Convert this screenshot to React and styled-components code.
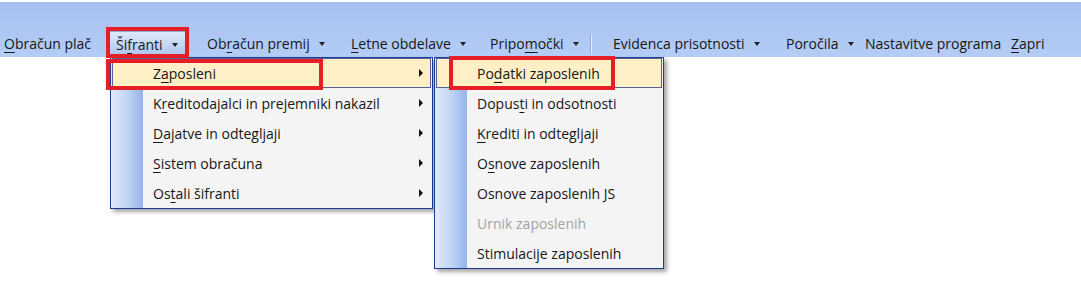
import React from "react";
import styled, { createGlobalStyle, css } from "styled-components";

const GlobalStyle = createGlobalStyle`
  html, body { margin: 0; padding: 0; background: #ffffff; }
  body { font-family: "Open Sans", "Noto Sans", sans-serif; font-size: 14px; color: #1b1b1b; }
  * { box-sizing: border-box; }
`;

const Screen = styled.div`
  position: relative;
  width: 1081px;
  height: 288px;
  overflow: hidden;
  background: #ffffff;
`;

const MenuBar = styled.nav`
  margin-top: 2px;
  height: 55px;
  display: flex;
  align-items: flex-end;
  background: linear-gradient(to bottom, #a5c0ef 0%, #b4cdf6 100%);
`;

const BarItem = styled.div`
  flex: none;
  height: 26px;
  width: ${(p) => p.$w}px;
  margin-left: ${(p) => p.$ml || 0}px;
  padding-left: ${(p) => (p.$pl != null ? p.$pl : 7)}px;
  padding-bottom: 1px;
  display: flex;
  align-items: center;
  white-space: nowrap;
  color: #161616;
  ${(p) =>
    p.$active &&
    css`
      background: linear-gradient(to bottom, #dde9fb 0%, #c3d7f5 50%, #a8c3ee 100%);
      border: 1px solid #8ea9d6;
      border-bottom: none;
      padding-left: 6px;
    `}
`;

const Caret = styled.span`
  display: inline-block;
  margin-left: 9px;
  width: 0;
  height: 0;
  border-left: 3.5px solid transparent;
  border-right: 3.5px solid transparent;
  border-top: 4px solid #222;
  margin-top: 1px;
`;

const BarSeparator = styled.div`
  flex: none;
  width: 19px;
  height: 26px;
  display: flex;
  align-items: center;
  padding-left: 3px;
  &::before {
    content: "";
    width: 1px;
    height: 20px;
    background: #93abd6;
    box-shadow: 1px 0 0 #e6eefb;
  }
`;

const Mnemonic = styled.span`
  text-decoration: underline;
  text-underline-offset: 3px;
  text-decoration-thickness: 1px;
`;

const Menu = styled.div`
  position: absolute;
  left: ${(p) => p.$left}px;
  top: ${(p) => p.$top}px;
  width: ${(p) => p.$width}px;
  border: 1px solid #1d3c8f;
  background: linear-gradient(to right, #e0eafb 0px, #c2d5f5 16px, #93b3e8 32px, #f4f4f4 32px);
  box-shadow: 3px 3px 4px rgba(0, 0, 0, 0.35);
  display: flex;
  flex-direction: column;
`;

const Row = styled.div`
  height: 30px;
  display: flex;
  align-items: center;
  padding-left: 42px;
  padding-right: 9px;
  white-space: nowrap;
  color: ${(p) => (p.$disabled ? "#a3a3a3" : "#161616")};
  ${(p) =>
    p.$active &&
    css`
      margin: 0 1px;
      padding-left: 40px;
      padding-right: 7px;
      background: #feefc7;
      border: 1px solid #56649a;
    `}
`;

const SubArrow = styled.span`
  margin-left: auto;
  width: 0;
  height: 0;
  border-top: 4px solid transparent;
  border-bottom: 4px solid transparent;
  border-left: 4px solid #111;
`;

const Annotation = styled.div`
  position: absolute;
  left: ${(p) => p.$x}px;
  top: ${(p) => p.$y}px;
  width: ${(p) => p.$w}px;
  height: ${(p) => p.$h}px;
  border: 4px solid #e61e26;
  pointer-events: none;
`;

function Label({ text }) {
  const i = text.indexOf("&");
  if (i < 0) return <span>{text}</span>;
  return (
    <span>
      {text.slice(0, i)}
      <Mnemonic>{text[i + 1]}</Mnemonic>
      {text.slice(i + 2)}
    </span>
  );
}

const barItems = [
  { t: "&Obračun plač", w: 109, pl: 4 },
  { t: "Ši&franti", w: 78, caret: true, active: true },
  { t: "Ob&račun premij", w: 144, ml: 13, caret: true },
  { t: "&Letne obdelave", w: 139, caret: true },
  { t: "Pripo&močki", w: 104, caret: true },
  { sep: true },
  { t: "Evidenca prisotnosti", w: 173, caret: true },
  { t: "Poročila", w: 79, caret: true },
  { t: "Nastavitve programa", w: 146 },
  { t: "&Zapri", w: 60 },
];

const menu1 = [
  { t: "Z&aposleni", active: true },
  { t: "K&reditodajalci in prejemniki nakazil" },
  { t: "&Dajatve in odtegljaji" },
  { t: "&Sistem obračuna" },
  { t: "Os&tali šifranti" },
];

const menu2 = [
  { t: "Po&datki zaposlenih", active: true },
  { t: "Dopus&ti in odsotnosti" },
  { t: "&Krediti in odtegljaji" },
  { t: "O&snove zaposlenih" },
  { t: "Osnove zaposlenih JS" },
  { t: "Urnik zaposlenih", disabled: true },
  { t: "Stimulacije zaposlenih" },
];

export default function App() {
  return (
    <Screen>
      <GlobalStyle />
      <MenuBar>
        {barItems.map((it, i) =>
          it.sep ? (
            <BarSeparator key={i} />
          ) : (
            <BarItem key={i} $w={it.w} $ml={it.ml} $pl={it.pl} $active={it.active}>
              <Label text={it.t} />
              {it.caret && <Caret />}
            </BarItem>
          )
        )}
      </MenuBar>

      <Menu $left={110} $top={57} $width={323}>
        {menu1.map((r, i) => (
          <Row key={i} $active={r.active}>
            <Label text={r.t} />
            <SubArrow />
          </Row>
        ))}
      </Menu>

      <Menu $left={434} $top={57} $width={230}>
        {menu2.map((r, i) => (
          <Row key={i} $active={r.active} $disabled={r.disabled}>
            <Label text={r.t} />
          </Row>
        ))}
      </Menu>

      <Annotation $x={106} $y={27} $w={83} $h={31} />
      <Annotation $x={106} $y={59} $w={217} $h={31} />
      <Annotation $x={449} $y={56} $w={166} $h={34} />
    </Screen>
  );
}
